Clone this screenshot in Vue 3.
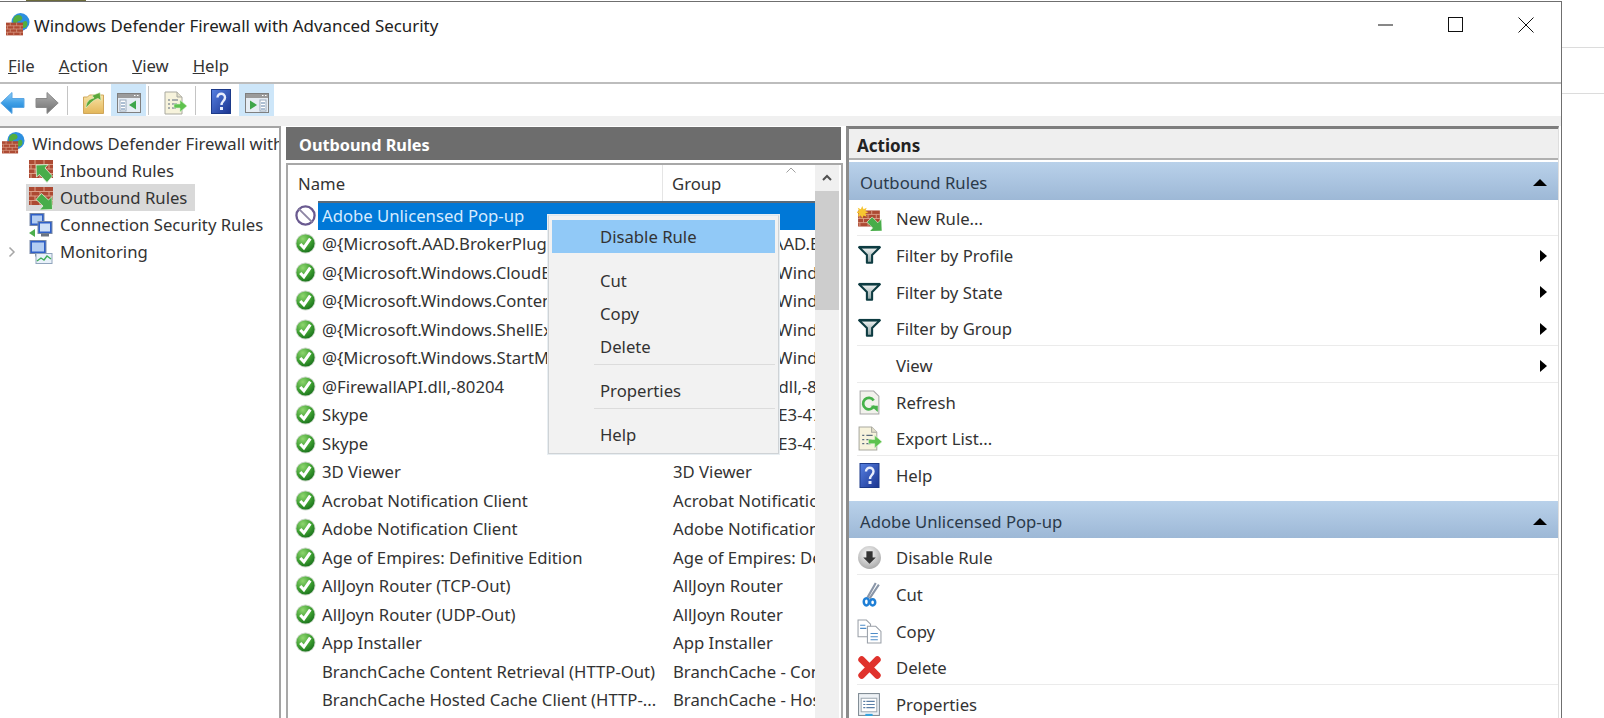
<script setup>
const menus = [
  { k: 'F', r: 'ile', cls: 'm-file' },
  { k: 'A', r: 'ction', cls: 'm-action' },
  { k: 'V', r: 'iew', cls: 'm-view' },
  { k: 'H', r: 'elp', cls: 'm-help' }
]
const tree = [
  { icon: 'brick-in', label: 'Inbound Rules' },
  { icon: 'brick-out', label: 'Outbound Rules', sel: true },
  { icon: 'net', label: 'Connection Security Rules' },
  { icon: 'monitor', label: 'Monitoring', chevron: true }
]
const rows = [
  { n: 'Adobe Unlicensed Pop-up', g: '', i: 'blocked', sel: true },
  { n: '@{Microsoft.AAD.BrokerPlugin_1000.19041', g: '@{Microsoft.AAD.BrokerPlugin', i: 'check' },
  { n: '@{Microsoft.Windows.CloudExperienceHost', g: '@{Microsoft. Windows.Cloud', i: 'check' },
  { n: '@{Microsoft.Windows.ContentDeliveryMgr', g: '@{Microsoft. Windows.Content', i: 'check' },
  { n: '@{Microsoft.Windows.ShellExperienceHost', g: '@{Microsoft. Windows.Shell', i: 'check' },
  { n: '@{Microsoft.Windows.StartMenuExperience', g: '@{Microsoft. Windows.Start', i: 'check' },
  { n: '@FirewallAPI.dll,-80204', g: '@FirewallAPI.dll,-80200', i: 'check' },
  { n: 'Skype', g: '{78E1CD8 -49E3-476E-B926', i: 'check' },
  { n: 'Skype', g: '{78E1CD8 -49E3-476E-B926', i: 'check' },
  { n: '3D Viewer', g: '3D Viewer', i: 'check' },
  { n: 'Acrobat Notification Client', g: 'Acrobat Notification Client', i: 'check' },
  { n: 'Adobe Notification Client', g: 'Adobe Notification Client', i: 'check' },
  { n: 'Age of Empires: Definitive Edition', g: 'Age of Empires: Definitive Edition', i: 'check' },
  { n: 'AllJoyn Router (TCP-Out)', g: 'AllJoyn Router', i: 'check' },
  { n: 'AllJoyn Router (UDP-Out)', g: 'AllJoyn Router', i: 'check' },
  { n: 'App Installer', g: 'App Installer', i: 'check' },
  { n: 'BranchCache Content Retrieval (HTTP-Out)', g: 'BranchCache - Content Retrieval', i: '' },
  { n: 'BranchCache Hosted Cache Client (HTTP-...', g: 'BranchCache - Hosted Cache', i: '' }
]
const contextItems = [
  { label: 'Disable Rule', cls: 'cm-hot' },
  { label: 'Cut', cls: 'cm-cut' },
  { label: 'Copy', cls: 'cm-copy' },
  { label: 'Delete', cls: 'cm-del', sep: true },
  { label: 'Properties', cls: 'cm-prop', sep: true },
  { label: 'Help', cls: 'cm-help' }
]
const groups = [
  {
    title: 'Outbound Rules',
    cls: 'group-one',
    items: [
      { icon: 'new-rule', label: 'New Rule...', line: true },
      { icon: 'filter', label: 'Filter by Profile', sub: true },
      { icon: 'filter', label: 'Filter by State', sub: true },
      { icon: 'filter', label: 'Filter by Group', sub: true, line: true },
      { icon: '', label: 'View', sub: true, line: true },
      { icon: 'refresh', label: 'Refresh' },
      { icon: 'export', label: 'Export List...', line: true },
      { icon: 'help', label: 'Help' }
    ]
  },
  {
    title: 'Adobe Unlicensed Pop-up',
    cls: 'group-two',
    items: [
      { icon: 'disable', label: 'Disable Rule', line: true },
      { icon: 'cut', label: 'Cut' },
      { icon: 'copy', label: 'Copy' },
      { icon: 'delete', label: 'Delete', line: true },
      { icon: 'props', label: 'Properties' }
    ]
  }
]
</script>

<template>
  <div class="page">
    <svg class="defs" width="0" height="0" aria-hidden="true">
      <defs>
        <radialGradient id="gGreen" cx=".35" cy=".25" r=".85"><stop offset="0" stop-color="#8fd66f"/><stop offset=".55" stop-color="#3fa032"/><stop offset="1" stop-color="#136a18"/></radialGradient>
        <linearGradient id="gBlue" x1="0" y1="0" x2="0" y2="1"><stop offset="0" stop-color="#8ccdf7"/><stop offset=".5" stop-color="#3f9fe6"/><stop offset="1" stop-color="#1a7fd0"/></linearGradient>
        <linearGradient id="gGray" x1="0" y1="0" x2="0" y2="1"><stop offset="0" stop-color="#b0b0b0"/><stop offset="1" stop-color="#6f6f6f"/></linearGradient>
        <linearGradient id="gHelp" x1="0" y1="0" x2="1" y2="1"><stop offset="0" stop-color="#5680e2"/><stop offset="1" stop-color="#1a348f"/></linearGradient>
        <linearGradient id="gFolder" x1="0" y1="0" x2="0" y2="1"><stop offset="0" stop-color="#f8e3a5"/><stop offset="1" stop-color="#e3b659"/></linearGradient>
        <linearGradient id="gFun" x1="0" y1="0" x2="0" y2="1"><stop offset="0" stop-color="#f4f6f6"/><stop offset="1" stop-color="#8aa0a0"/></linearGradient>
        <radialGradient id="gDis" cx=".45" cy=".35" r=".7"><stop offset="0" stop-color="#fafafa"/><stop offset="1" stop-color="#a5a5a5"/></radialGradient>

        <symbol id="bricks" viewBox="0 0 24 18">
          <rect width="24" height="18" fill="#ad4a33"/>
          <path d="M0 4.500h24M0 9h24M0 13.500h24M6 0v4.500M15 0v4.500M2 4.500V9M11 4.500V9M20 4.500V9M6 9v4.500M15 9v4.500M2 13.500V18M11 13.500V18M20 13.500V18" stroke="#dc9f88" stroke-width="1" fill="none"/>
        </symbol>
        <symbol id="fw-globe" viewBox="0 0 24 24">
          <circle cx="14.500" cy="9" r="9" fill="#2d8fe0"/>
          <path d="M9 3c3-2 6-1 7 1s-1 4-3 4-2 3-4 3-3-5 0-8zM19 8c2 0 3 2 2 5-1 2-4 3-5 1s1-6 3-6z" fill="#53ae3f"/>
          <use href="#bricks" x="0" y="9" width="17" height="14"/>
        </symbol>
        <symbol id="brick-in" viewBox="0 0 24 24">
          <use href="#bricks" x="0" y="1" width="24" height="18"/>
          <path d="M7 6l12-.5-3 3.500 7.500 8-5.500 6.500-7.500-8L7.500 18z" fill="#48ad4a" stroke="#e6f3e0" stroke-width=".8"/>
        </symbol>
        <symbol id="brick-out" viewBox="0 0 24 24">
          <use href="#bricks" x="0" y="1" width="24" height="18"/>
          <path d="M23.500 23.500l-13 .5 3.500-4-7-6.500 5.500-6 7 6.500 3.500-3.500z" fill="#48ad4a" stroke="#e6f3e0" stroke-width=".8"/>
        </symbol>
        <symbol id="net" viewBox="0 0 24 24">
          <rect x="1" y="0.500" width="14" height="12" fill="#2f60c8" stroke="#7a8aa6"/>
          <rect x="3" y="2.500" width="10" height="8" fill="#b3cdf2"/>
          <rect x="9" y="8.500" width="14" height="12" fill="#2f60c8" stroke="#7a8aa6"/>
          <rect x="11" y="10.500" width="10" height="8" fill="#cfe0f7"/>
          <rect x="12" y="20.500" width="8" height="3" fill="#6c7480"/>
          <path d="M0 20l6-4v8z" fill="#4cae4c"/>
        </symbol>
        <symbol id="monitor" viewBox="0 0 24 24">
          <rect x="1" y="0.500" width="16" height="13" fill="#2f60c8" stroke="#7a8aa6"/>
          <rect x="3" y="2.500" width="12" height="9" fill="#b3cdf2"/>
          <rect x="6" y="13.500" width="6" height="3" fill="#7c8490"/>
          <rect x="7" y="13.500" width="16" height="10" fill="#e9f1fa" stroke="#90a4bc"/>
          <path d="M8 21l4-3 3 2 3-4 4 3" stroke="#3fae56" stroke-width="1.400" fill="none"/>
        </symbol>
        <symbol id="check" viewBox="0 0 22 22">
          <circle cx="11" cy="11" r="10.500" fill="#c9d6c6"/>
          <circle cx="11" cy="11" r="9.500" fill="url(#gGreen)"/>
          <path d="M5.500 11.500l3.800 4L16 6" stroke="#fff" stroke-width="3.200" fill="none"/>
        </symbol>
        <symbol id="blocked" viewBox="0 0 22 22">
          <circle cx="11" cy="11" r="9.500" fill="#fff" stroke="#6a5a90" stroke-width="2.400"/>
          <path d="M4 4l14 14" stroke="#8d86a4" stroke-width="2"/>
        </symbol>
        <symbol id="back" viewBox="0 0 25 24">
          <path d="M.8 12L12 1.500v6h12v9H12v6z" fill="url(#gBlue)" stroke="#5aa6e4" stroke-linejoin="round"/>
        </symbol>
        <symbol id="forward" viewBox="0 0 24 24">
          <path d="M23.200 12L12 1.500v6H1v9h11v6z" fill="url(#gGray)" stroke="#8a8a8a" stroke-linejoin="round"/>
        </symbol>
        <symbol id="folder-up" viewBox="0 0 21 22">
          <path d="M.5 5h4l2-2h14v18.500H.5z" fill="url(#gFolder)" stroke="#cfa65a"/>
          <path d="M3 16c0-6 3-9 8-10L9 3.500l8-3 1 8-3-2c-4 1-7 4-12 9.500z" fill="#5aa83a" stroke="#e9f3d5" stroke-width=".6"/>
        </symbol>
        <symbol id="panel-left" viewBox="0 0 24 20">
          <rect x=".5" y=".5" width="23" height="19" fill="#e6edf4" stroke="#7f7f7f"/>
          <rect x="1" y="1" width="22" height="4" fill="#9b9b9b"/>
          <path d="M17 2.500h1.500M20 2.500h1.500" stroke="#fff"/>
          <rect x="3" y="7" width="6" height="11" fill="#fff" stroke="#9ab"/>
          <path d="M4 10h4M4 13h4M4 16h4" stroke="#5b7ea6"/>
          <path d="M19 7.500v9l-7-4.500z" fill="#3fa64a"/>
        </symbol>
        <symbol id="panel-right" viewBox="0 0 24 20">
          <rect x=".5" y=".5" width="23" height="19" fill="#e6edf4" stroke="#7f7f7f"/>
          <rect x="1" y="1" width="22" height="4" fill="#9b9b9b"/>
          <path d="M17 2.500h1.500M20 2.500h1.500" stroke="#fff"/>
          <rect x="15" y="7" width="6" height="11" fill="#fff" stroke="#9ab"/>
          <path d="M16 10h4M16 13h4M16 16h4" stroke="#5b7ea6"/>
          <path d="M5 7.500v9l7-4.500z" fill="#3fa64a"/>
        </symbol>
        <symbol id="export" viewBox="0 0 24 24">
          <path d="M2 1h12l5 5v17H2z" fill="#f7f3dc" stroke="#a9a9a0"/>
          <path d="M14 1v5h5" fill="#e3e0cb" stroke="#a9a9a0"/>
          <path d="M5 9h2M9 9h6M5 13h2M9 13h5M5 17h2M9 17h4" stroke="#5b6b7c" stroke-width="1.200"/>
          <path d="M11 13h6V9l7 6-7 6v-4h-6z" fill="#5ec24e" stroke="#d7f0cf" stroke-width=".6"/>
        </symbol>
        <symbol id="help" viewBox="0 0 20 25">
          <rect x=".5" y=".5" width="19" height="24" fill="url(#gHelp)" stroke="#1c3a8a"/>
          <path d="M6.500 8.500c0-5 7.500-5 7.500 0 0 3.500-3.500 3.500-3.500 7.500" stroke="#e9eefc" stroke-width="2.400" fill="none"/>
          <rect x="9" y="18" width="3" height="3" fill="#e9eefc"/>
        </symbol>
        <symbol id="new-rule" viewBox="0 0 24 24">
          <use href="#bricks" x="1" y="4" width="21" height="16"/>
          <path d="M5 0l1.300 3 3-1.300L8 4.700l3 1.300-3 1.300L9.300 10.300 6.300 9 5 12 3.700 9l-3 1.300L2 7.300-1 6l3-1.300L.7 1.700l3 1.300z" fill="#f7c531"/>
          <path d="M24 24l-12 .5 3-3.500-5.500-5.500 5-5 5.500 5.500 3.500-3.500z" fill="#48ad4a" stroke="#e6f3e0" stroke-width=".6"/>
        </symbol>
        <symbol id="filter" viewBox="0 0 24 24">
          <path d="M2 4h20l-7.500 7.500V19h-5v-7.500z" fill="url(#gFun)" stroke="#0e3c42" stroke-width="2" stroke-linejoin="round"/>
          <path d="M2 4h20" stroke="#0e3c42" stroke-width="2.400"/>
        </symbol>
        <symbol id="refresh" viewBox="0 0 24 24">
          <path d="M3 1h13l5 5v17H3z" fill="#f2f2ec" stroke="#a7a7a7"/>
          <path d="M16.500 15a5.500 5.500 0 1 1-.5-5" stroke="#46b24a" stroke-width="2.600" fill="none"/>
          <path d="M13 15h7v6z" fill="#46b24a"/>
        </symbol>
        <symbol id="disable" viewBox="0 0 24 24">
          <circle cx="12" cy="12" r="11" fill="url(#gDis)"/>
          <path d="M12 18l-6-6h3V6h6v6h3z" fill="#333"/>
        </symbol>
        <symbol id="cut" viewBox="0 0 24 24">
          <path d="M18 1l-8 14M21 2.500L12 16" stroke="#8a96a8" stroke-width="2"/>
          <ellipse cx="9" cy="19" rx="2.500" ry="3.500" fill="none" stroke="#1f7fd6" stroke-width="2.400"/>
          <ellipse cx="15" cy="19.500" rx="2.500" ry="3" fill="none" stroke="#1f7fd6" stroke-width="2.400"/>
        </symbol>
        <symbol id="copy" viewBox="0 0 24 24">
          <path d="M1 1h8l4 4v12H1z" fill="#fff" stroke="#9aa0a8"/>
          <path d="M10 7h8l5 5v11H10z" fill="#fff" stroke="#9aa0a8"/>
          <path d="M3 6h5M3 9h6M13 14h7M13 17h7M13 20h7" stroke="#4e8cc8"/>
        </symbol>
        <symbol id="delete" viewBox="0 0 24 24">
          <path d="M4.500 4.500l15 15M19.500 4.500l-15 15" stroke="#e0322c" stroke-width="6.500" stroke-linecap="round"/>
        </symbol>
        <symbol id="props" viewBox="0 0 24 24">
          <rect x="1.500" y="1.500" width="20" height="21" fill="#eef2f6" stroke="#7f8a94"/>
          <rect x="4" y="6" width="15" height="13" fill="#fff" stroke="#9fa9b2"/>
          <path d="M6 9h2M9 9h8M6 12h2M9 12h8M6 15h2M9 15h8" stroke="#5b7ea6"/>
          <rect x="8" y="21" width="7" height="2" fill="#35a3e0"/>
        </symbol>
      </defs>
    </svg>

    <div class="window">
      <div class="titlebar">
        <svg class="title-icon"><use href="#fw-globe"/></svg>
        <span class="title-text">Windows Defender Firewall with Advanced Security</span>
        <div class="caption">
          <svg width="16" height="16" viewBox="0 0 16 16"><path d="M0 8h15" stroke="#111"/></svg>
          <svg width="16" height="16" viewBox="0 0 16 16"><rect x=".5" y=".5" width="14" height="14" fill="none" stroke="#111"/></svg>
          <svg width="16" height="16" viewBox="0 0 16 16"><path d="M.5.500l15 15M15.500.500l-15 15" stroke="#111"/></svg>
        </div>
      </div>
      <div class="menubar">
        <span v-for="m in menus" :key="m.k" :class="['menu-item', m.cls]"><u>{{ m.k }}</u>{{ m.r }}</span>
      </div>
      <div class="toolbar">
        <svg class="tb tb-back"><use href="#back"/></svg>
        <svg class="tb tb-fwd"><use href="#forward"/></svg>
        <i class="tb-sep sep-a"></i>
        <svg class="tb tb-folder"><use href="#folder-up"/></svg>
        <span class="tb-btn btn-a"><svg class="tb-panel"><use href="#panel-left"/></svg></span>
        <i class="tb-sep sep-b"></i>
        <svg class="tb tb-doc"><use href="#export"/></svg>
        <i class="tb-sep sep-c"></i>
        <svg class="tb tb-help"><use href="#help"/></svg>
        <span class="tb-btn btn-b"><svg class="tb-panel"><use href="#panel-right"/></svg></span>
      </div>

      <div class="body">
        <aside class="tree">
          <div class="tree-root">
            <svg class="root-icon"><use href="#fw-globe"/></svg>
            <span class="tree-root-text">Windows Defender Firewall with Advanced Security</span>
          </div>
          <div v-for="t in tree" :key="t.label" class="tree-row">
            <svg v-if="t.chevron" class="chev" width="8" height="12" viewBox="0 0 8 12"><path d="M1.500 1.500L6 6l-4.500 4.500" fill="none" stroke="#a6a6a6" stroke-width="1.500"/></svg>
            <div :class="['tree-item', { 'tree-sel': t.sel }]">
              <svg class="tree-icon"><use :href="'#' + t.icon"/></svg>
              <span>{{ t.label }}</span>
            </div>
          </div>
        </aside>

        <section class="center">
          <header class="dark-head">Outbound Rules</header>
          <div class="list-box">
            <div class="list">
              <div class="col-head">
                <span class="col-name">Name</span>
                <span class="col-group">Group</span>
                <svg class="sort" width="10" height="6" viewBox="0 0 10 6"><path d="M.5 5.500L5 1l4.500 4.500" fill="none" stroke="#a0a0a0"/></svg>
              </div>
              <div v-for="(r, idx) in rows" :key="idx" class="row">
                <span class="row-icon"><svg v-if="r.i" class="state"><use :href="'#' + r.i"/></svg></span>
                <div :class="['row-main', { 'row-sel': r.sel }]">
                  <span class="cell-name"><span class="cell-text">{{ r.n }}</span></span>
                  <span class="cell-group">{{ r.g }}</span>
                </div>
              </div>
            </div>
            <div class="scroll">
              <svg class="scroll-up" width="12" height="8" viewBox="0 0 12 8"><path d="M2 6l4-4 4 4" fill="none" stroke="#505050" stroke-width="2"/></svg>
              <div class="thumb"></div>
            </div>
            <div class="context">
              <template v-for="c in contextItems" :key="c.label">
                <div :class="['cm-item', c.cls]">{{ c.label }}</div>
                <div v-if="c.sep" class="cm-sep"></div>
              </template>
            </div>
          </div>
        </section>

        <section class="actions">
          <header class="actions-head">Actions</header>
          <div v-for="g in groups" :key="g.title" :class="['group', g.cls]">
            <div class="group-head">
              <span>{{ g.title }}</span>
              <i class="tri-up"></i>
            </div>
            <div v-for="a in g.items" :key="a.label" :class="['action', { 'has-line': a.line }]">
              <span class="action-icon"><svg v-if="a.icon" class="a-svg"><use :href="'#' + a.icon"/></svg></span>
              <span class="action-label">{{ a.label }}</span>
              <i v-if="a.sub" class="tri-right"></i>
            </div>
          </div>
        </section>
      </div>
    </div>
    <div class="outside">
      <i class="out-line"></i>
      <i class="out-line"></i>
    </div>
    <div class="photo-edge"></div>
  </div>
</template>

<style>
html, body { margin: 0; background: #fff; overflow: hidden; }
</style>

<style scoped>
.page {
  position: relative;
  width: 1604px;
  height: 718px;
  overflow: hidden;
  display: flex;
  background: #fff;
  font-family: "Noto Sans", "Open Sans", sans-serif;
  font-size: 16.7px;
  color: #333;
}
.defs { position: absolute; }
.photo-edge { position: absolute; left: 26px; top: 0; width: 60px; height: 1px; background: #6b6a3a; }
.window {
  width: 1562px;
  height: 717px;
  margin-top: 1px;
  border-top: 1px solid #6f6f6f;
  border-right: 1px solid #6f6f6f;
  display: flex;
  flex-direction: column;
  box-sizing: border-box;
  flex: none;
}
.outside { flex: 1; padding-top: 47px; display: flex; flex-direction: column; gap: 45px; }
.out-line { display: block; height: 1px; background: #dcdcdc; }

.titlebar { height: 50px; box-sizing: border-box; padding: 0 0 5px 6px; display: flex; align-items: center; flex: none; }
.title-icon { width: 24px; height: 24px; flex: none; margin-right: 4px; }
.title-text { font-size: 16.9px; color: #222; margin-top: 2px; }
.caption { margin-left: auto; display: flex; align-items: center; gap: 54px; margin-right: 27px; }

.menubar { height: 30px; flex: none; border-bottom: 2px solid #bdbdbd; box-sizing: content-box; display: flex; align-items: center; color: #333; padding-bottom: 0; }
.menu-item { flex: none; margin-top: -3px; }
.m-file { margin-left: 8px; }
.m-action { margin-left: 24px; }
.m-view { margin-left: 24px; }
.m-help { margin-left: 24px; }

.toolbar { height: 32px; flex: none; display: flex; align-items: center; }
.tb { flex: none; margin-top: 5px; }
.tb-back { width: 25px; height: 24px; }
.tb-fwd { width: 24px; height: 24px; margin-left: 10px; }
.tb-sep { display: block; width: 1px; height: 29px; background: #c4c4c4; flex: none; }
.sep-a { margin-left: 8px; }
.tb-folder { width: 21px; height: 22px; margin-left: 15px; }
.tb-btn { width: 35px; height: 32px; background: #cde6f9; display: flex; align-items: center; justify-content: center; flex: none; }
.btn-a { margin-left: 7px; }
.tb-panel { width: 24px; height: 20px; margin-top: 6px; }
.sep-b { margin-left: 2px; }
.tb-doc { width: 24px; height: 24px; margin-left: 14px; }
.sep-c { margin-left: 8px; }
.tb-help { width: 20px; height: 25px; margin-left: 15px; margin-top: 2px; }
.btn-b { margin-left: 8px; }

.body { flex: 1; min-height: 0; display: flex; border-top: 10px solid #f0f0f0; }

.tree { width: 281px; flex: none; border-top: 2px solid #a4a4a4; border-right: 2px solid #a4a4a4; box-sizing: border-box; overflow: hidden; }
.tree-root { display: flex; align-items: center; height: 28px; padding: 1px 0 0 2px; white-space: nowrap; color: #333; box-sizing: content-box; }
.root-icon { width: 23px; height: 23px; flex: none; margin-right: 7px; }
.tree-root-text { flex: none; }
.tree-row { position: relative; height: 27px; display: flex; align-items: center; padding-left: 26px; }
.chev { position: absolute; left: 8px; top: 8px; }
.tree-item { display: flex; align-items: center; height: 27px; padding: 0 8px 0 3px; }
.tree-sel { background: #d9d9d9; }
.tree-icon { width: 24px; height: 24px; flex: none; margin-right: 7px; }

.center { width: 557px; flex: none; margin-left: 5px; display: flex; flex-direction: column; }
.dark-head { height: 33px; box-sizing: border-box; flex: none; margin: 1px 2px 0 0; background: #6d6d6d; color: #fff; font-weight: 700; font-size: 16.3px; display: flex; align-items: center; padding: 2px 0 0 13px; }
.list-box { position: relative; flex: 1; min-height: 0; margin-top: 3px; border-top: 2px solid #a8a8a8; border-left: 2px solid #a8a8a8; border-right: 2px solid #a8a8a8; display: flex; overflow: hidden; }
.list { width: 527px; flex: none; overflow: hidden; }
.col-head { position: relative; height: 36px; display: flex; align-items: center; }
.col-name { width: 375px; padding: 0 0 0 10px; box-sizing: border-box; flex: none; border-right: 1px solid #e5e5e5; align-self: stretch; display: flex; align-items: center; }
.col-group { padding: 0 0 0 9px; }
.sort { position: absolute; left: 498px; top: 2px; }
.row { display: flex; height: 28.5px; align-items: center; }
.row-icon { width: 30px; flex: none; display: flex; align-items: center; padding-left: 7px; box-sizing: border-box; height: 100%; }
.state { width: 21px; height: 21px; flex: none; }
.row-main { flex: 1; min-width: 0; height: 100%; display: flex; align-items: center; white-space: nowrap; overflow: hidden; }
.row-sel { background: #0078d7; color: #d6ebff; box-shadow: inset 0 2px 0 #5d6b78; }
.cell-name { width: 345px; flex: none; overflow: hidden; padding-left: 4px; box-sizing: border-box; }
.cell-text { display: inline-block; }
.cell-group { padding-left: 10px; flex: none; }
.scroll { width: 24px; flex: none; background: #f0f0f0; position: relative; }
.scroll-up { display: block; margin: 9px auto 0; }
.thumb { margin-top: 9px; height: 119px; background: #cdcdcd; }

.context { position: absolute; left: 260px; top: 50px; width: 231px; height: 239px; box-sizing: border-box; background: #f2f2f2; border: 1px solid #cfd3d6; border-top-color: #dde8f0; padding: 4px 3px; box-shadow: 0 0 0 1px #e8eef2; }
.cm-item { height: 33px; display: flex; align-items: center; padding-left: 48px; color: #333; }
.cm-hot { background: #91c9f7; margin-bottom: 11px; }
.cm-sep { height: 1px; background: #dcdcdc; margin: 1px 0 9px 42px; }

.actions { flex: 1; min-width: 0; margin-left: 3px; margin-right: 2px; border-left: 3px solid #8c8c8c; border-top: 3px solid #7d7d7d; border-right: 1px solid #dedede; }
.actions-head { box-sizing: border-box; height: 31px; background: #efefef; border-bottom: 2px solid #b0b0b0; display: flex; align-items: center; padding: 4px 0 0 8px; font-weight: 700; font-size: 17px; color: #222; margin-bottom: 2px; }
.group-head { height: 37.5px; box-sizing: border-box; display: flex; align-items: center; padding: 3px 11px 0 11px; background: linear-gradient(#b9d1ea, #9db8d6); color: #2b3a4a; }
.tri-up { margin-left: auto; width: 0; height: 0; border-left: 7px solid transparent; border-right: 7px solid transparent; border-bottom: 7px solid #000; }
.action { position: relative; height: 36.7px; display: flex; align-items: center; padding: 2px 0 0 8px; box-sizing: border-box; }
.has-line::after { content: ""; position: absolute; left: 8px; right: 0; bottom: 0; height: 1px; background: #ebebeb; }
.action-icon { width: 39px; flex: none; display: flex; align-items: center; }
.a-svg { width: 25px; height: 25px; }
.action-label { color: #333; }
.tri-right { margin-left: auto; margin-right: 11px; width: 0; height: 0; border-top: 6px solid transparent; border-bottom: 6px solid transparent; border-left: 7px solid #000; }
.group-two { margin-top: 7.9px; }
</style>
